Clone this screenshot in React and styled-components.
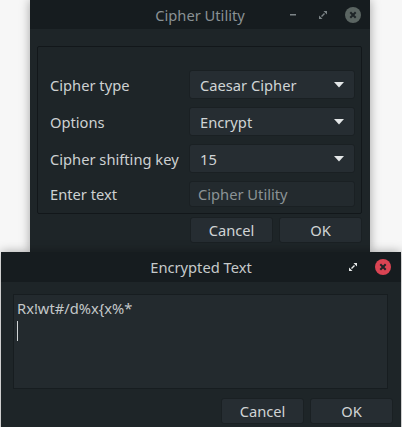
import React from 'react';
import styled, { createGlobalStyle } from 'styled-components';

const Global = createGlobalStyle`
  html, body { margin: 0; padding: 0; background: #f7f7f7; }
  body { font-family: "Noto Sans", "Liberation Sans", sans-serif; font-size: 14.7px; }
`;

const Page = styled.div`
  width: 402px;
  height: 427px;
  overflow: hidden;
  display: flex;
  flex-direction: column;
`;

const Window = styled.div`
  margin-left: ${p => p.$left}px;
  width: ${p => p.$width}px;
  height: ${p => p.$height}px;
  flex-shrink: 0;
  background: #1e2528;
  box-shadow: 0 0 10px rgba(0, 0, 0, 0.35);
  display: flex;
  flex-direction: column;
  position: relative;
  z-index: ${p => p.$z};
`;

const TitleBar = styled.div`
  height: ${p => p.$h}px;
  background: #161c1f;
  display: flex;
  align-items: center;
  justify-content: center;
  position: relative;
  color: ${p => (p.$active ? '#c6cacb' : '#8a9194')};
`;

const TitleButtons = styled.div`
  position: absolute;
  right: ${p => p.$right}px;
  top: 0;
  bottom: 0;
  display: flex;
  align-items: center;
  gap: 14px;
`;

const Body = styled.div`
  flex: 1;
  display: flex;
  flex-direction: column;
  padding: ${p => p.$pad};
`;

const GroupBox = styled.div`
  border: 1px solid #12171a;
  border-radius: 2px;
  padding: 23px 6px 6px 12px;
  display: grid;
  grid-template-columns: 139px 1fr;
  row-gap: 8px;
  align-items: center;
`;

const Label = styled.div`
  color: #cdd1d2;
`;

const Combo = styled.div`
  height: 29px;
  box-sizing: border-box;
  background: #262d32;
  border: 1px solid #1a2023;
  border-radius: 3px;
  display: flex;
  align-items: center;
  justify-content: space-between;
  padding: 0 10px;
  color: #d0d4d5;
`;

const Input = styled.div`
  height: 26px;
  box-sizing: border-box;
  background: #232a2e;
  border: 1px solid #1a2023;
  border-radius: 3px;
  display: flex;
  align-items: center;
  padding: 0 8px;
  color: #8b9396;
`;

const ButtonRow = styled.div`
  display: flex;
  justify-content: flex-end;
  gap: 6px;
  margin-top: ${p => p.$top}px;
`;

const Button = styled.div`
  width: 83px;
  height: 26px;
  box-sizing: border-box;
  background: #262d32;
  border: 1px solid #1a2023;
  border-radius: 3px;
  display: flex;
  align-items: center;
  justify-content: center;
  color: #d0d4d5;
`;

const TextArea = styled.div`
  height: 95px;
  margin-right: 5px;
  box-sizing: border-box;
  background: #232a2e;
  border: 1px solid #171d20;
  padding: 3px 3px;
  color: #c3c8c9;
  line-height: 20px;
`;

const Caret = styled.div`
  width: 1px;
  height: 20px;
  margin-top: 3px;
  background: #d0d4d5;
`;

const Arrow = () => (
  <svg width="10" height="6" viewBox="0 0 10 6">
    <path d="M0 0 L10 0 L5 5.5 Z" fill="#e4e7e8" />
  </svg>
);

const MinIcon = () => (
  <svg width="16" height="16" viewBox="0 0 16 16">
    <rect x="5" y="7" width="6" height="1.5" fill="#7c8487" />
  </svg>
);

const MaxIcon = ({ color }) => (
  <svg width="16" height="16" viewBox="0 0 16 16">
    <path d="M8.5 4 L12 4 L12 7.5 Z M4 12 L4 8.5 L7.5 12 Z M6 9 L9 6 L10 7 L7 10 Z" fill={color} />
  </svg>
);

const CloseIcon = ({ fill }) => (
  <svg width="16" height="16" viewBox="0 0 16 16">
    <circle cx="8" cy="8" r="8" fill={fill} />
    <path d="M5.3 5.3 L10.7 10.7 M10.7 5.3 L5.3 10.7" stroke="#1e2427" strokeWidth="2" />
  </svg>
);

const fields = [
  { label: 'Cipher type', value: 'Caesar Cipher' },
  { label: 'Options', value: 'Encrypt' },
  { label: 'Cipher shifting key', value: '15' },
];

export default function App() {
  return (
    <>
      <Global />
      <Page>
        <Window $left={30} $width={340} $height={252} $z={1}>
          <TitleBar $h={29}>
            Cipher Utility
            <TitleButtons $right={9}>
              <MinIcon />
              <MaxIcon color="#7c8487" />
              <CloseIcon fill="#5b6562" />
            </TitleButtons>
          </TitleBar>
          <Body $pad="17px 8px 0 7px">
            <GroupBox>
              {fields.map(f => (
                <React.Fragment key={f.label}>
                  <Label>{f.label}</Label>
                  <Combo>
                    <span>{f.value}</span>
                    <Arrow />
                  </Combo>
                </React.Fragment>
              ))}
              <Label>Enter text</Label>
              <Input>Cipher Utility</Input>
            </GroupBox>
            <ButtonRow $top={3}>
              <Button>Cancel</Button>
              <Button>OK</Button>
            </ButtonRow>
          </Body>
        </Window>
        <Window $left={1} $width={400} $height={200} $z={2}>
          <TitleBar $h={30} $active>
            Encrypted Text
            <TitleButtons $right={10}>
              <MaxIcon color="#e8eaea" />
              <CloseIcon fill="#da4453" />
            </TitleButtons>
          </TitleBar>
          <Body $pad="12px 8px 0 12px">
            <TextArea>
              Rx!wt#/d%x{'{'}x%*
              <Caret />
            </TextArea>
            <ButtonRow $top={9}>
              <Button>Cancel</Button>
              <Button>OK</Button>
            </ButtonRow>
          </Body>
        </Window>
      </Page>
    </>
  );
}
